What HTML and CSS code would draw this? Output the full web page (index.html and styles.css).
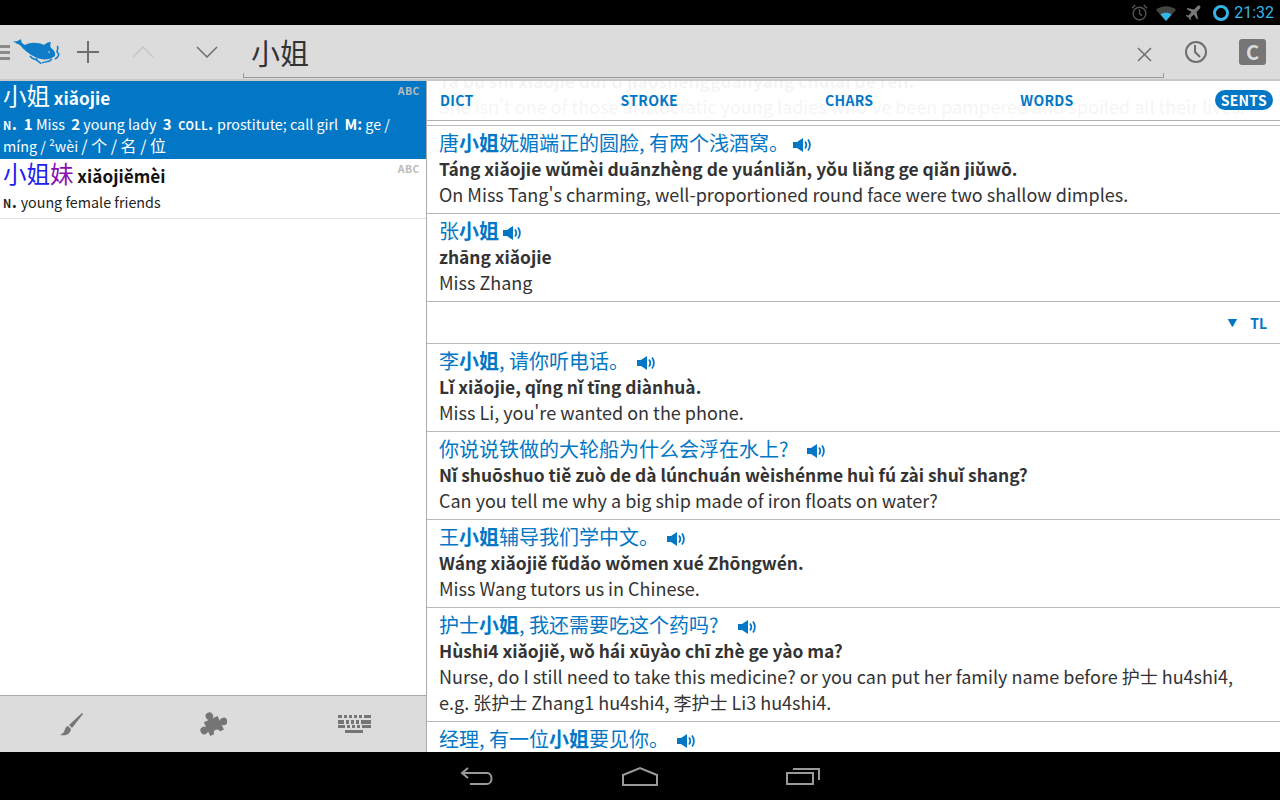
FILE: index.html
```html
<!DOCTYPE html>
<html lang="zh">
<head>
    <meta charset="UTF-8">
    <title>小姐</title>
    <link rel="stylesheet" href="styles.css">
</head>
<body>
    <div class="status-bar">
        <svg class="st-icon" width="17" height="17" viewBox="0 0 16 16"><circle cx="8" cy="9" r="6" fill="none" stroke="#555" stroke-width="1.3"/><path d="M8 5v4l2.5 2M1 4l3-3M15 4l-3-3" fill="none" stroke="#555" stroke-width="1.3"/></svg>
        <svg class="st-icon" width="20" height="16" viewBox="0 0 20 16"><path d="M0 5C5 0 15 0 20 5L10 16Z" fill="#444"/><path d="M4.5 9.5C7 7 13 7 15.500 9.500L10 16Z" fill="#33b5e5"/></svg>
        <svg class="st-icon plane" width="16" height="16" viewBox="0 0 16 16"><path d="M15 1c-1-1-2.500 0-3.500 1L9 4.500 2.500 3 1.500 4l5 3-3 3.500-2-.5-.8.800 2.800 1.700 1.700 2.800.8-.8-.5-2 3.500-3 3 5 1-1L11.500 7l2.500-2.500c1-1 2-2.500 1-3.500Z" fill="#777"/></svg>
        <span class="ring"></span>
        <span class="clock">21:32</span>
    </div>

    <div class="toolbar">
        <div class="hamburger"><i></i><i></i><i></i></div>
        <svg class="logo" width="48" height="26" viewBox="0 0 48 26">
            <path d="M0 2C3 3 5 2 8 0 8 3 9 5 12 6 17 3 25 3 31 6 33 4 35 3 38 3 37 5 37 7 38 9 41 11 43 14 42 17 36 22 28 21 22 18 16 15 10 10 7 6 5 5 2 4 0 2Z" fill="#0f7cc8"/>
            <path d="M44 7C47 9 42 12 45 14 47 16 44 19 42 20M39 20C36 24 32 22 29 24M24 19C22 22 27 22 28 25M17 17C19 20 21 20 24 21" fill="none" stroke="#0f7cc8" stroke-width="1.500"/>
            <circle cx="36" cy="13" r=".8" fill="#dcdcdc"/>
        </svg>
        <svg class="tb-btn add" width="22" height="22" viewBox="0 0 22 22"><path d="M11 0v22M0 11h22" stroke="#6e6e6e" stroke-width="2"/></svg>
        <svg class="tb-btn up" width="22" height="12" viewBox="0 0 22 12"><path d="M1 11 11 1l10 10" fill="none" stroke="#c4c4c4" stroke-width="1.500"/></svg>
        <svg class="tb-btn down" width="22" height="12" viewBox="0 0 22 12"><path d="M1 1l10 10L21 1" fill="none" stroke="#6e6e6e" stroke-width="1.500"/></svg>
        <div class="search">
            <span class="search-text">小姐</span>
            <svg width="15" height="15" viewBox="0 0 15 15"><path d="M1 1l13 13M14 1 1 14" stroke="#6e6e6e" stroke-width="1.500"/></svg>
        </div>
        <svg class="history" width="24" height="24" viewBox="0 0 24 24"><circle cx="12" cy="12" r="10" fill="none" stroke="#6e6e6e" stroke-width="2"/><path d="M11 5v7l5 5" fill="none" stroke="#6e6e6e" stroke-width="2"/></svg>
        <div class="c-btn">C</div>
    </div>

    <div class="main">
        <div class="left">
            <div class="results">
                <div class="result selected">
                    <span class="tag">ABC</span>
                    <div class="head"><span class="hanzi">小姐</span> <b>xiǎojie</b></div>
                    <div class="defn"><span class="pos">n.</span> &nbsp;<b>1</b> Miss &nbsp;<b>2</b> young lady &nbsp;<b>3</b> &nbsp;<span class="pos">coll.</span> prostitute; call girl &nbsp;<b>M:</b> ge / míng / ²wèi <span class="measure">/ 个 / 名 / 位</span></div>
                </div>
                <div class="result">
                    <span class="tag">ABC</span>
                    <div class="head"><span class="hanzi"><span class="tone3">小姐</span><span class="tone4">妹</span></span> <b>xiǎojiěmèi</b></div>
                    <div class="defn"><span class="pos">n.</span> young female friends</div>
                </div>
            </div>
            <div class="bottom-bar">
                <svg width="26" height="24" viewBox="0 0 26 24"><path d="M24 1 11 13l3 3L25 2ZM10 14c-3 1-3 4-4 6-1 1-2 2-4 3 5 1 10 0 11-6Z" fill="#757575"/></svg>
                <svg width="28" height="28" viewBox="0 0 26 26"><g transform="rotate(-25 13 13)" fill="#757575"><rect x="6" y="8" width="14" height="14"/><circle cx="13" cy="5" r="3.500"/><rect x="11.500" y="6" width="3" height="3"/><circle cx="23" cy="15" r="3.500"/><rect x="19" y="13.500" width="3" height="3"/><circle cx="3" cy="15" r="3.500"/><rect x="4" y="13.500" width="3" height="3"/><circle cx="13" cy="22" r="3" fill="#dcdcdc"/></g></svg>
                <svg width="34" height="18" viewBox="0 0 34 18"><g fill="#757575"><rect x="0" y="0" width="4" height="3"/><rect x="6" y="0" width="3" height="3"/><rect x="11" y="0" width="3" height="3"/><rect x="16" y="0" width="3" height="3"/><rect x="21" y="0" width="3" height="3"/><rect x="26" y="0" width="7" height="3"/><rect x="0" y="5" width="6" height="4"/><rect x="8" y="5" width="3" height="4"/><rect x="13" y="5" width="3" height="4"/><rect x="18" y="5" width="3" height="4"/><rect x="23" y="5" width="10" height="4"/><rect x="0" y="10" width="7" height="3"/><rect x="9" y="10" width="3" height="3"/><rect x="14" y="10" width="3" height="3"/><rect x="19" y="10" width="3" height="3"/><rect x="24" y="10" width="9" height="3"/><rect x="7" y="15" width="18" height="3"/></g></svg>
            </div>
        </div>

        <div class="right">
            <div class="tabs">
                <span class="tab">DICT</span>
                <span class="tab">STROKE</span>
                <span class="tab">CHARS</span>
                <span class="tab">WORDS</span>
                <span class="tab active">SENTS</span>
            </div>
            <div class="sentences">
                <div class="sent">
                    <div class="pinyin">Tā bù shì xiǎojie duì tī jiāoshēngguànyǎng chūlai de rén.</div>
                    <div class="en">She isn't one of those aristocratic young ladies who've been pampered and spoiled all their lives.</div>
                </div>
                <div class="sent">
                    <div class="zh">唐<b>小姐</b>妩媚端正的圆脸, 有两个浅酒窝。<svg class="speaker near" width="18" height="16" viewBox="0 0 18 16"><use href="#spk"/></svg></div>
                    <div class="pinyin">Táng xiǎojie wǔmèi duānzhèng de yuánliǎn, yǒu liǎng ge qiǎn jiǔwō.</div>
                    <div class="en">On Miss Tang's charming, well-proportioned round face were two shallow dimples.</div>
                </div>
                <div class="sent">
                    <div class="zh">张<b>小姐</b><svg class="speaker near" width="18" height="16" viewBox="0 0 18 16"><use href="#spk"/></svg></div>
                    <div class="pinyin">zhāng xiǎojie</div>
                    <div class="en">Miss Zhang</div>
                </div>
                <div class="source-row"><span class="arrow">▼</span><span>TL</span></div>
                <div class="sent">
                    <div class="zh">李<b>小姐</b>, 请你听电话。<svg class="speaker" width="18" height="16" viewBox="0 0 18 16"><use href="#spk"/></svg></div>
                    <div class="pinyin">Lǐ xiǎojie, qǐng nǐ tīng diànhuà.</div>
                    <div class="en">Miss Li, you're wanted on the phone.</div>
                </div>
                <div class="sent">
                    <div class="zh">你说说铁做的大轮船为什么会浮在水上?<svg class="speaker far" width="18" height="16" viewBox="0 0 18 16"><use href="#spk"/></svg></div>
                    <div class="pinyin">Nǐ shuōshuo tiě zuò de dà lúnchuán wèishénme huì fú zài shuǐ shang?</div>
                    <div class="en">Can you tell me why a big ship made of iron floats on water?</div>
                </div>
                <div class="sent">
                    <div class="zh">王<b>小姐</b>辅导我们学中文。<svg class="speaker" width="18" height="16" viewBox="0 0 18 16"><use href="#spk"/></svg></div>
                    <div class="pinyin">Wáng xiǎojiě fǔdǎo wǒmen xué Zhōngwén.</div>
                    <div class="en">Miss Wang tutors us in Chinese.</div>
                </div>
                <div class="sent">
                    <div class="zh">护士<b>小姐</b>, 我还需要吃这个药吗?<svg class="speaker far" width="18" height="16" viewBox="0 0 18 16"><use href="#spk"/></svg></div>
                    <div class="pinyin">Hùshi4 xiǎojiě, wǒ hái xūyào chī zhè ge yào ma?</div>
                    <div class="en">Nurse, do I still need to take this medicine? or you can put her family name before 护士 hu4shi4, e.g. 张护士 Zhang1 hu4shi4, 李护士 Li3 hu4shi4.</div>
                </div>
                <div class="sent">
                    <div class="zh">经理, 有一位<b>小姐</b>要见你。<svg class="speaker" width="18" height="16" viewBox="0 0 18 16"><use href="#spk"/></svg></div>
                </div>
            </div>
        </div>
    </div>

    <div class="nav-bar">
        <svg width="34" height="20" viewBox="0 0 34 20"><path d="M8 2 2 7l6 5M2 7h25c6 0 6 11 0 11H10" fill="none" stroke="#9a9a9a" stroke-width="2"/></svg>
        <svg width="36" height="20" viewBox="0 0 36 20"><path d="M1 19V9L18 2l17 7v10Z" fill="none" stroke="#9a9a9a" stroke-width="2"/></svg>
        <svg width="34" height="20" viewBox="0 0 34 20"><path d="M1 7h26v11H1ZM7 3h26v11" fill="none" stroke="#9a9a9a" stroke-width="2"/></svg>
    </div>

    <svg width="0" height="0" class="defs"><defs><g id="spk"><path d="M0 5h4l6-4v14l-6-4H0Z" fill="#0277c6"/><path d="M12 4.500c1.500 2 1.500 5 0 7M15 2.500c2.500 3 2.500 8 0 11" fill="none" stroke="#0277c6" stroke-width="1.800"/></g></defs></svg>
</body>
</html>
```

FILE: styles.css
```css
html, body {
    margin: 0;
    padding: 0;
    height: 800px;
    overflow: hidden;
    background: #000;
    font-family: "Noto Sans CJK SC", "Noto Sans", sans-serif;
}
body {
    display: flex;
    flex-direction: column;
}
.defs {
    position: absolute;
}
.status-bar {
    height: 25px;
    flex: none;
    display: flex;
    align-items: center;
    justify-content: flex-end;
    padding-right: 6px;
    box-sizing: border-box;
    background: #000;
}
.st-icon {
    margin-right: 8px;
}
.plane {
    margin-left: 1px;
    margin-right: 12px;
}
.ring {
    width: 10px;
    height: 10px;
    border: 3px solid #33b5e5;
    border-radius: 50%;
    margin-right: 5px;
}
.clock {
    font-family: Roboto, sans-serif;
    font-size: 16px;
    color: #33b5e5;
}
.toolbar {
    height: 56px;
    flex: none;
    display: flex;
    align-items: center;
    box-sizing: border-box;
    background: #dcdcdc;
    border-bottom: 2px solid #c8c8c8;
}
.hamburger {
    width: 10px;
    display: flex;
    flex-direction: column;
    gap: 3px;
    margin-right: 3px;
}
.hamburger i {
    display: block;
    height: 3px;
    background: #8a8a8a;
}
.logo {
    margin-right: 16px;
}
.tb-btn {
    flex: none;
}
.up {
    margin-left: 33px;
}
.down {
    margin-left: 42px;
}
.search {
    flex: 1;
    height: 43px;
    margin: 8px 0 0 25px;
    padding: 0 11px 3px 7px;
    display: flex;
    align-items: center;
    justify-content: space-between;
    border: 1px solid #999;
    border-top: none;
    box-sizing: border-box;
    border-image: linear-gradient(to bottom, transparent 38px, #999 38px) 1;
}
.search-text {
    font-size: 29px;
    color: #333;
    line-height: 36px;
    margin-bottom: 5px;
}
.history {
    margin-left: 20px;
}
.c-btn {
    width: 27px;
    height: 26px;
    margin: 0 14px 0 31px;
    background: #767676;
    border-radius: 3px;
    color: #dcdcdc;
    font-size: 20px;
    font-weight: 700;
    line-height: 26px;
    text-align: center;
}
.main {
    flex: 1;
    display: flex;
    min-height: 0;
    background: #fff;
}
.left {
    width: 427px;
    flex: none;
    display: flex;
    flex-direction: column;
    box-sizing: border-box;
    border-right: 1px solid #aaa;
}
.results {
    flex: 1;
}
.result {
    position: relative;
    padding: 0 3px 5px;
    border-bottom: 1px solid #e2e2e2;
    color: #222;
}
.result.selected {
    padding-bottom: 2px;
    background: #0277c6;
    color: #fff;
    border-bottom: none;
}
.tag {
    position: absolute;
    top: 2px;
    right: 6px;
    font-size: 10.5px;
    font-weight: 700;
    letter-spacing: 0.5px;
    color: #bbb;
}
.head {
    height: 30px;
    padding-top: 2px;
    font-size: 17.2px;
    line-height: 30px;
    color: #111;
}
.selected .head {
    color: #fff;
}
.head b {
    font-weight: 700;
}
.hanzi {
    font-size: 23.5px;
    line-height: 1;
}
.tone3 {
    color: #2020f0;
}
.tone4 {
    color: #8a10b0;
}
.defn {
    font-size: 14.3px;
    line-height: 22px;
}
.defn b {
    font-size: 15px;
    font-weight: 700;
}
.measure {
    font-size: 16px;
    line-height: 1;
}
.pos {
    font-size: 16px;
    line-height: 1;
    font-variant: small-caps;
    font-weight: 700;
    letter-spacing: 0.5px;
}
.bottom-bar {
    height: 57px;
    flex: none;
    display: grid;
    grid-template-columns: repeat(3, 142px);
    align-items: center;
    justify-items: center;
    box-sizing: border-box;
    background: #dcdcdc;
    border-top: 1px solid #aaa;
}
.right {
    flex: 1;
    position: relative;
    overflow: hidden;
    min-width: 0;
}
.tabs {
    position: absolute;
    top: 0;
    left: 0;
    right: 0;
    height: 38px;
    padding: 0 7px 1px 13px;
    display: flex;
    align-items: center;
    justify-content: space-between;
    background: rgba(255, 255, 255, 0.95);
    border-bottom: 1px solid #b0b0b0;
}
.tab {
    font-size: 14px;
    font-weight: 700;
    letter-spacing: 0.3px;
    color: #0277c6;
}
.tab.active {
    margin-left: -6px;
    padding: 0 6px;
    background: #0277c6;
    color: #fff;
    border-radius: 10px;
    line-height: 20px;
}
.sentences {
    margin-top: -14px;
}
.sent {
    padding: 0 30px 6px 12px;
    border-bottom: 1px solid #b8b8b8;
    box-sizing: border-box;
}
.zh {
    padding-top: 4px;
    font-size: 20px;
    line-height: 25px;
    color: #0277c6;
}
.zh b {
    font-weight: 700;
}
.pinyin {
    padding-top: 1px;
    font-size: 17.4px;
    font-weight: 700;
    line-height: 26px;
    color: #333;
}
.en {
    margin-top: -1px;
    font-size: 18px;
    line-height: 26px;
    color: #333;
}
.speaker {
    margin-left: 8px;
    vertical-align: -2px;
}
.speaker.near {
    margin-left: 4px;
}
.speaker.far {
    margin-left: 19px;
}
.source-row {
    height: 41px;
    display: flex;
    align-items: center;
    justify-content: flex-end;
    gap: 13px;
    padding-right: 13px;
    font-size: 14px;
    font-weight: 700;
    color: #0277c6;
    border-bottom: 1px solid #b8b8b8;
}
.arrow {
    font-size: 10px;
}
.nav-bar {
    height: 48px;
    flex: none;
    display: flex;
    justify-content: center;
    align-items: center;
    gap: 128px;
    background: #000;
}
```
